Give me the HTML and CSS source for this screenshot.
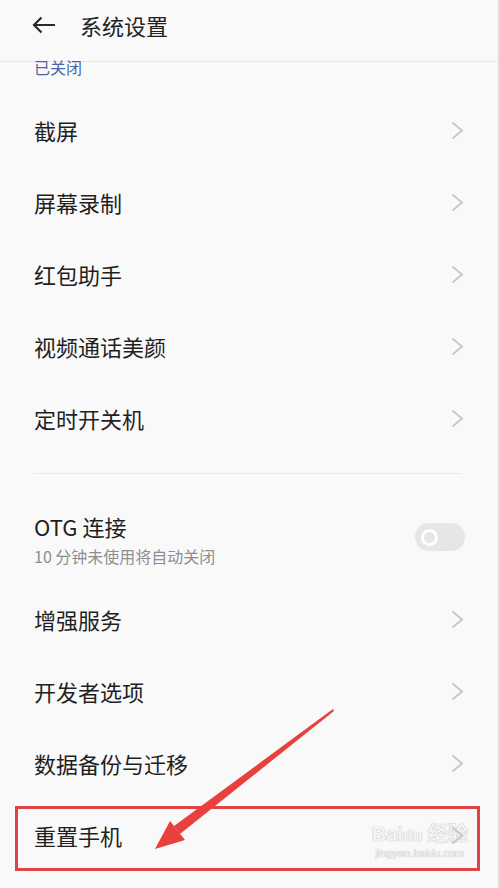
FILE: index.html
```html
<!DOCTYPE html>
<html lang="zh-CN">
<head>
    <meta charset="UTF-8">
    <meta name="viewport" content="width=device-width, initial-scale=1.0">
    <title>系统设置</title>
    <link rel="stylesheet" href="styles.css">
</head>
<body>
    <div class="screen">
        <header class="topbar">
            <svg class="back" width="24" height="18" viewBox="0 0 24 18">
                <path d="M23 9H2M9.5 1.5L2 9l7.5 7.5" fill="none" stroke="#2a2a2a" stroke-width="2.2"/>
            </svg>
            <h1>系统设置</h1>
        </header>

        <div class="prev-status">已关闭</div>

        <div class="list">
            <div class="row"><span>截屏</span><svg class="chev" width="13" height="19" viewBox="0 0 13 19"><path d="M1.5 1.5L11 9.5l-9.5 8" /></svg></div>
            <div class="row"><span>屏幕录制</span><svg class="chev" width="13" height="19" viewBox="0 0 13 19"><path d="M1.5 1.5L11 9.5l-9.5 8" /></svg></div>
            <div class="row"><span>红包助手</span><svg class="chev" width="13" height="19" viewBox="0 0 13 19"><path d="M1.5 1.5L11 9.5l-9.5 8" /></svg></div>
            <div class="row"><span>视频通话美颜</span><svg class="chev" width="13" height="19" viewBox="0 0 13 19"><path d="M1.5 1.5L11 9.5l-9.5 8" /></svg></div>
            <div class="row"><span>定时开关机</span><svg class="chev" width="13" height="19" viewBox="0 0 13 19"><path d="M1.5 1.5L11 9.5l-9.5 8" /></svg></div>
        </div>

        <div class="divider"></div>

        <div class="list second">
            <div class="row tall">
                <div class="texts">
                    <span>OTG 连接</span>
                    <small>10 分钟未使用将自动关闭</small>
                </div>
                <div class="switch"><b></b></div>
            </div>
            <div class="row"><span>增强服务</span><svg class="chev" width="13" height="19" viewBox="0 0 13 19"><path d="M1.5 1.5L11 9.5l-9.5 8" /></svg></div>
            <div class="row"><span>开发者选项</span><svg class="chev" width="13" height="19" viewBox="0 0 13 19"><path d="M1.5 1.5L11 9.5l-9.5 8" /></svg></div>
            <div class="row"><span>数据备份与迁移</span><svg class="chev" width="13" height="19" viewBox="0 0 13 19"><path d="M1.5 1.5L11 9.5l-9.5 8" /></svg></div>
            <div class="row marked">
                <span>重置手机</span>
                <div class="watermark">
                    <div class="wm-logo">Bai<span>du</span> 经验</div>
                    <div class="wm-url">jingyan.baidu.com</div>
                </div>
                <svg class="chev" width="13" height="19" viewBox="0 0 13 19"><path d="M1.5 1.5L11 9.5l-9.5 8" /></svg>
                <div class="mark-box"></div>
            </div>
        </div>

        <svg class="arrow" width="500" height="888" viewBox="0 0 500 888">
            <polygon points="333,709 334,711 180,834 174,826" fill="#e8403f"/>
            <polygon points="155,849 170,821 185,840" fill="#e8403f"/>
        </svg>
    </div>
</body>
</html>
```

FILE: styles.css
```css
* {
    box-sizing: border-box;
}
body {
    margin: 0;
    padding: 0;
    background-color: #f9f9f9;
    font-family: "Noto Sans CJK SC", "Noto Sans", sans-serif;
    color: #1f1f1f;
}
.screen {
    position: relative;
    width: 500px;
    height: 888px;
    overflow: hidden;
    border-right: 2px solid #dcdcdc;
}
.topbar {
    height: 62px;
    display: flex;
    align-items: center;
    padding: 0 0 12px 32px;
    border-bottom: 1px solid #e6e6e6;
}
.topbar .back {
    margin-right: 24px;
}
.topbar h1 {
    margin: 0;
    font-size: 22px;
    font-weight: 400;
    color: #222;
}
.prev-status {
    height: 32px;
    padding: 0 0 0 34px;
    font-size: 16px;
    line-height: 10px;
    color: #4a66a6;
}
.list {
    display: flex;
    flex-direction: column;
}
.row {
    position: relative;
    height: 72px;
    display: flex;
    align-items: center;
    justify-content: space-between;
    padding: 0 34px 0 34px;
    font-size: 22px;
}
.chev {
    position: relative;
    fill: none;
    stroke: #c6c6c6;
    stroke-width: 1.8;
}
.divider {
    margin: 19px 36px 0 33px;
    border-top: 1px solid #e9e9e9;
}
.second {
    padding-top: 24px;
}
.row.tall {
    height: 85px;
    align-items: flex-start;
    padding-top: 12px;
}
.texts {
    display: flex;
    flex-direction: column;
}
.texts small {
    font-size: 16px;
    color: #8e8e8e;
    margin-top: 2px;
}
.switch {
    width: 50px;
    height: 28px;
    margin: 13px -1px 0 0;
    border-radius: 14px;
    background-color: #e6e6e6;
    display: flex;
    align-items: center;
    padding-left: 6px;
}
.switch b {
    width: 17px;
    height: 17px;
    border-radius: 50%;
    border: 3px solid #fff;
    background-color: #e6e6e6;
}
.mark-box {
    position: absolute;
    top: 7px;
    left: 15px;
    right: 18px;
    bottom: 0;
    border: 3px solid #df4547;
}
.watermark {
    position: absolute;
    right: 30px;
    bottom: 12px;
    text-align: center;
    font-family: "Liberation Sans", sans-serif;
    color: #f4f4f4;
    text-shadow: 0 0 1px #bdbdbd, 0 0 1px #bdbdbd;
}
.wm-logo {
    font-size: 20px;
    font-weight: 700;
    line-height: 22px;
}
.wm-logo span {
    font-size: 16px;
}
.wm-url {
    font-size: 11px;
    line-height: 12px;
}
.arrow {
    position: absolute;
    top: 0;
    left: 0;
    pointer-events: none;
}
```
